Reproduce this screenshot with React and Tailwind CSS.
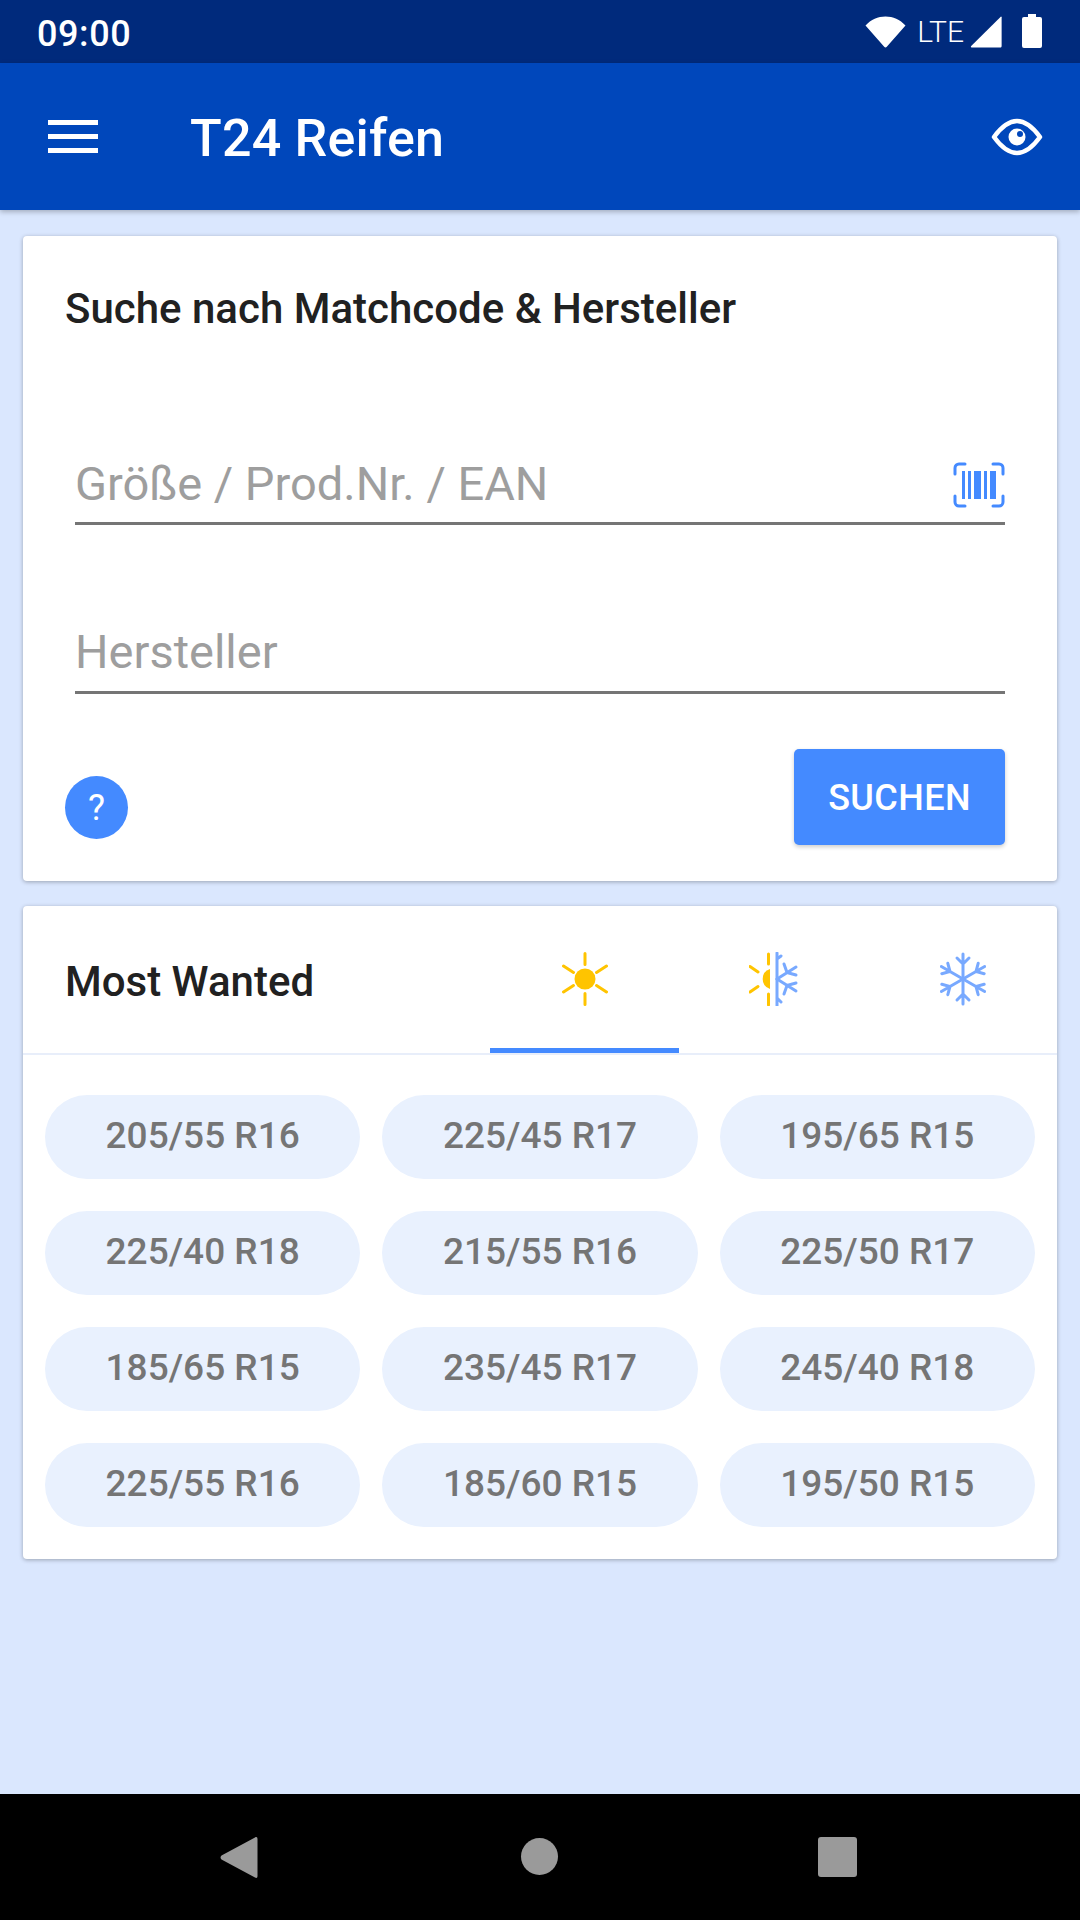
const rows = [
  ["205/55 R16", "225/45 R17", "195/65 R15"],
  ["225/40 R18", "215/55 R16", "225/50 R17"],
  ["185/65 R15", "235/45 R17", "245/40 R18"],
  ["225/55 R16", "185/60 R15", "195/50 R15"],
];

function Wifi() {
  return (
    <svg width="41" height="32" viewBox="0 0 41 32" className="block">
      <path d="M.5 9.500C6 3.500 13 .5 20.500 .5s14.500 3 20 9L21.800 30.800c-.7.8-1.900.8-2.600 0z" fill="#fff" />
    </svg>
  );
}
function Signal() {
  return (
    <svg width="32" height="32" viewBox="0 0 32 32" className="block">
      <path d="M31 .5c.3 0 .6.300.6.700V30c0 1-.6 1.600-1.600 1.600H2c-1 0-1.500-.9-.8-1.600z" fill="#fff" />
    </svg>
  );
}
function Battery() {
  return (
    <svg width="20" height="34" viewBox="0 0 20 34" className="block">
      <path d="M6 0h8v3h4a2 2 0 0 1 2 2v27a2 2 0 0 1-2 2H2a2 2 0 0 1-2-2V5a2 2 0 0 1 2-2h4z" fill="#fff" />
    </svg>
  );
}
function Eye() {
  return (
    <svg width="52" height="38" viewBox="0 0 52 38" className="block">
      <path d="M3 19C11 8 18 3 26 3s15 5 23 16C41 30 34 35 26 35S11 30 3 19z" fill="none" stroke="#fff" strokeWidth="4.500" strokeLinejoin="round" />
      <circle cx="26" cy="19" r="8.500" fill="#fff" />
      <circle cx="29" cy="16" r="3" fill="#0047bb" />
    </svg>
  );
}
function Barcode() {
  return (
    <svg width="52" height="46" viewBox="0 0 52 46" className="block" fill="none">
      <path d="M12 2H6a4 4 0 0 0-4 4v6M40 2h6a4 4 0 0 1 4 4v6M12 44H6a4 4 0 0 1-4-4v-6M40 44h6a4 4 0 0 0 4-4v-6" stroke="#448aff" strokeWidth="3" strokeLinecap="round" />
      <g fill="#448aff">
        <rect x="9" y="9" width="3" height="28" />
        <rect x="15" y="9" width="3" height="28" />
        <rect x="21" y="9" width="7" height="28" />
        <rect x="31" y="9" width="3" height="28" />
        <rect x="37" y="9" width="6" height="28" />
      </g>
    </svg>
  );
}
function Sun() {
  return (
    <svg width="46" height="54" viewBox="0 0 46 54" className="block" stroke="#ffc400" strokeWidth="3" strokeLinecap="round" fill="none">
      <circle cx="23" cy="27" r="10.500" fill="#ffc400" stroke="none" />
      <path d="M23 1.500v11M23 41.500v11M1.500 14l10 6.500M44.500 14l-10 6.500M1.500 40l10-6.500M44.500 40l-10-6.500" />
    </svg>
  );
}
function Mixed() {
  return (
    <svg width="50" height="54" viewBox="0 0 50 54" className="block" fill="none" strokeLinecap="round">
      <g stroke="#ffc400" strokeWidth="3">
        <path d="M19.500 2v10M19.500 42v11M1 14.500l8 5.500M1 40l8-5.500" />
      </g>
      <path d="M21 17a10.500 10.500 0 0 0 0 20z" fill="#ffc400" />
      <g stroke="#78a9ff" strokeWidth="3">
        <path d="M28 1v53M28 7l4-3M28 46l4 4" />
        <path d="M28 27L47 15M38 20.500L35 12M38 20.500L47 23" />
        <path d="M28 27L47 39M38 33.500L35 42M38 33.500L47 31" />
      </g>
    </svg>
  );
}
function Flake() {
  const arm = "M0 0V-25M-6 -21L0 -15L6 -21";
  return (
    <svg width="46" height="54" viewBox="-23 -27 46 54" className="block" fill="none" stroke="#78a9ff" strokeWidth="3" strokeLinecap="round">
      {[0, 60, 120, 180, 240, 300].map((a) => (
        <path key={a} d={arm} transform={`rotate(${a})`} />
      ))}
    </svg>
  );
}

export default function App() {
  return (
    <div className="w-[1080px] h-[1920px] flex flex-col bg-[#dae7fe] font-['Roboto',sans-serif] overflow-hidden">
      <div className="h-[63px] shrink-0 bg-[#002a7c] flex items-center justify-between pl-[37px] pr-[38px] text-white">
        <span className="text-[36px] leading-none tracking-[0.6px] font-medium mt-[4px]">09:00</span>
        <div className="flex items-center">
          <Wifi />
          <span className="ml-[11px] text-[30px] leading-none font-light mt-[1px]">LTE</span>
          <div className="ml-[6px]"><Signal /></div>
          <div className="ml-[20px] -mt-[1px]"><Battery /></div>
        </div>
      </div>
      <div className="h-[147px] shrink-0 bg-[#0047bb] flex items-center pl-[48px] pr-[37px] text-white shadow-[0_2px_5px_rgba(0,0,0,0.25)] relative">
        <div className="w-[50px] flex flex-col gap-[9px]">
          <div className="h-[5px] bg-white" />
          <div className="h-[5px] bg-white" />
          <div className="h-[5px] bg-white" />
        </div>
        <span className="ml-[92px] mt-[4px] text-[52px] tracking-[0.2px] leading-none font-medium">T24 Reifen</span>
        <div className="ml-auto"><Eye /></div>
      </div>
      <main className="flex-1 flex flex-col px-[23px] pt-[26px] gap-[25px]">
        <section className="h-[645px] bg-white rounded-[4px] shadow-[0_1px_4px_rgba(0,0,0,0.3)] flex flex-col pl-[42px] pr-[52px]">
          <h2 className="mt-[48px] text-[42px] leading-[50px] font-medium text-[#212121]">Suche nach Matchcode &amp; Hersteller</h2>
          <div className="mt-[124px] ml-[10px] h-[67px] border-b-[3px] border-[#757575] flex items-start justify-between">
            <span className="text-[47px] leading-[52px] text-[#9e9e9e]">Größe / Prod.Nr. / EAN</span>
            <div className="mt-[4px]"><Barcode /></div>
          </div>
          <div className="mt-[102px] ml-[10px] h-[67px] border-b-[3px] border-[#757575]">
            <span className="block text-[47px] leading-[50px] text-[#9e9e9e]">Hersteller</span>
          </div>
          <div className="mt-[55px] flex justify-between">
            <div className="mt-[27px] w-[63px] h-[63px] rounded-full bg-[#448aff] flex items-center justify-center text-white text-[36px]">?</div>
            <button className="w-[211px] h-[96px] pt-[2px] bg-[#448aff] rounded-[5px] text-white text-[36px] tracking-[0.4px] font-medium shadow-[0_2px_4px_rgba(0,0,0,0.2)]">SUCHEN</button>
          </div>
        </section>
        <section className="h-[653px] bg-white rounded-[4px] shadow-[0_1px_4px_rgba(0,0,0,0.3)] flex flex-col">
          <div className="h-[149px] border-b-2 border-[#e8eefa] flex">
            <div className="flex-1 pl-[42px] pt-[3px] flex items-center text-[42px] font-medium text-[#212121]">Most Wanted</div>
            <div className="w-[189px] border-b-[5px] border-[#448aff] flex items-start justify-center pt-[46px]"><Sun /></div>
            <div className="w-[189px] flex items-start justify-center pt-[46px]"><Mixed /></div>
            <div className="w-[189px] flex items-start justify-center pt-[46px]"><Flake /></div>
          </div>
          <div className="px-[22px] pt-[40px] grid grid-cols-3 gap-x-[22px] gap-y-[32px]">
            {rows.flat().map((t) => (
              <div key={t} className="h-[84px] pb-[2px] rounded-full bg-[#e9f1fe] flex items-center justify-center text-[37px] font-medium text-[#757575]">{t}</div>
            ))}
          </div>
        </section>
      </main>
      <div className="h-[126px] shrink-0 bg-black flex items-start pl-[220px] pt-[42px]">
        <svg width="38" height="43" viewBox="0 0 38 43" className="block">
          <path d="M35 1.500c1.500-1 2.500-.3 2.500 1.500v37c0 1.800-1 2.500-2.500 1.500L1.500 23.500c-1.300-1-1.300-3 0-4z" fill="#9a9a9a" />
        </svg>
        <div className="ml-[263px] mt-[2px] w-[37px] h-[37px] rounded-full bg-[#9a9a9a]" />
        <div className="ml-[260px] mt-[1px] w-[39px] h-[40px] rounded-[3px] bg-[#9a9a9a]" />
      </div>
    </div>
  );
}
